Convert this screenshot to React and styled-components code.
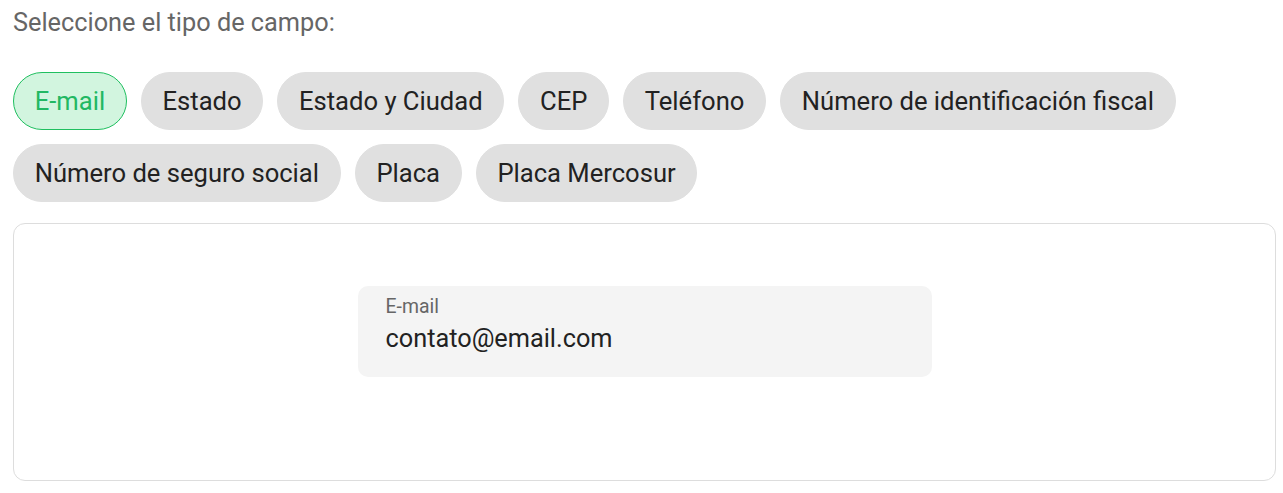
import React, { useState } from 'react';
import styled, { createGlobalStyle } from 'styled-components';

const GlobalStyle = createGlobalStyle`
  body {
    margin: 0;
    background: #ffffff;
    font-family: Roboto, "Liberation Sans", sans-serif;
  }
`;

const Page = styled.div`
  padding: 8px 7px 0 13px;
`;

const Title = styled.p`
  margin: 0;
  font-size: 25.3px;
  line-height: 30px;
  color: #666666;
`;

const ChipList = styled.div`
  display: flex;
  flex-wrap: wrap;
  gap: 14px;
  margin-top: 34px;
`;

const Chip = styled.button`
  height: 58px;
  padding: 0 20.7px;
  border-radius: 29px;
  border: 1px solid ${(p) => (p.$active ? '#1fbf5f' : '#e0e0e0')};
  background: ${(p) => (p.$active ? '#d2f5df' : '#e0e0e0')};
  color: ${(p) => (p.$active ? '#22b863' : '#222222')};
  font-family: Roboto, "Liberation Sans", sans-serif;
  font-size: 25.6px;
  cursor: pointer;
`;

const Panel = styled.div`
  margin-top: 21px;
  height: 258px;
  border: 1px solid #dddddd;
  border-radius: 12px;
  box-sizing: border-box;
  display: flex;
  justify-content: center;
  padding-top: 62px;
`;

const Field = styled.div`
  width: 574px;
  height: 91px;
  box-sizing: border-box;
  background: #f4f4f4;
  border-radius: 10px;
  padding: 10px 28px 0;
`;

const Label = styled.div`
  font-size: 19.4px;
  line-height: 22px;
  color: #666666;
`;

const Value = styled.div`
  margin-top: 6px;
  font-size: 25.3px;
  line-height: 30px;
  color: #222222;
`;

const types = [
  'E-mail',
  'Estado',
  'Estado y Ciudad',
  'CEP',
  'Teléfono',
  'Número de identificación fiscal',
  'Número de seguro social',
  'Placa',
  'Placa Mercosur',
];

export default function App() {
  const [selected, setSelected] = useState('E-mail');
  return (
    <Page>
      <GlobalStyle />
      <Title>Seleccione el tipo de campo:</Title>
      <ChipList>
        {types.map((t) => (
          <Chip key={t} $active={t === selected} onClick={() => setSelected(t)}>
            {t}
          </Chip>
        ))}
      </ChipList>
      <Panel>
        <Field>
          <Label>E-mail</Label>
          <Value>contato@email.com</Value>
        </Field>
      </Panel>
    </Page>
  );
}
